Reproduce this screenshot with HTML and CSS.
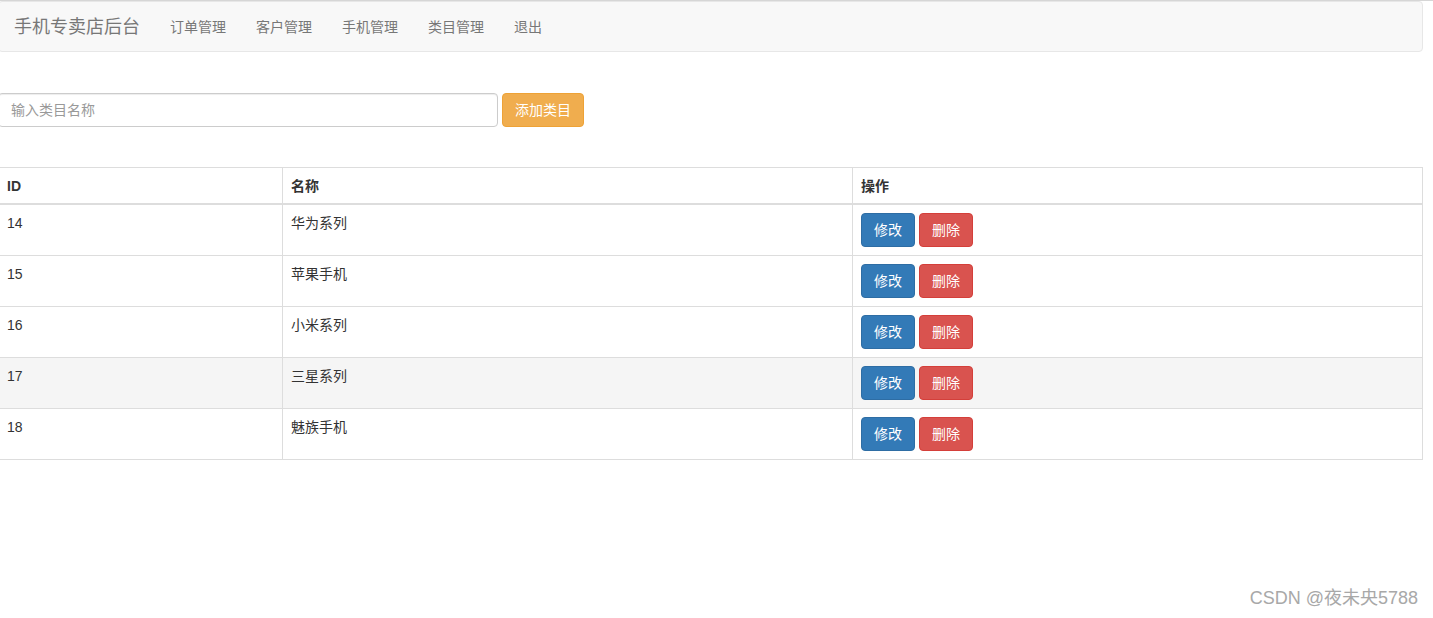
FILE: index.html
```html
<!DOCTYPE html>
<html lang="zh-CN">
<head>
<meta charset="utf-8">
<title>手机专卖店后台</title>
<link rel="stylesheet" href="styles.css">
</head>
<body>
<div class="topline"></div>
<div class="page">
  <nav class="navbar">
    <a class="brand" href="#">手机专卖店后台</a>
    <ul class="nav">
      <li><a href="#">订单管理</a></li>
      <li><a href="#">客户管理</a></li>
      <li><a href="#">手机管理</a></li>
      <li><a href="#">类目管理</a></li>
      <li><a href="#">退出</a></li>
    </ul>
  </nav>

  <form class="add-form">
    <input class="form-control" type="text" placeholder="输入类目名称">
    <button class="btn btn-warning" type="button">添加类目</button>
  </form>

  <table class="table">
    <thead>
      <tr><th class="c1">ID</th><th class="c2">名称</th><th class="c3">操作</th></tr>
    </thead>
    <tbody>
      <tr><td>14</td><td>华为系列</td><td><button class="btn btn-primary">修改</button> <button class="btn btn-danger">删除</button></td></tr>
      <tr><td>15</td><td>苹果手机</td><td><button class="btn btn-primary">修改</button> <button class="btn btn-danger">删除</button></td></tr>
      <tr><td>16</td><td>小米系列</td><td><button class="btn btn-primary">修改</button> <button class="btn btn-danger">删除</button></td></tr>
      <tr class="hover"><td>17</td><td>三星系列</td><td><button class="btn btn-primary">修改</button> <button class="btn btn-danger">删除</button></td></tr>
      <tr><td>18</td><td>魅族手机</td><td><button class="btn btn-primary">修改</button> <button class="btn btn-danger">删除</button></td></tr>
    </tbody>
  </table>
</div>
<div class="watermark">CSDN @夜未央5788</div>
</body>
</html>
```

FILE: styles.css
```css
* { box-sizing: border-box; }
html, body { margin: 0; padding: 0; }
body {
  font-family: "Liberation Sans", "Noto Sans CJK SC", Arial, sans-serif;
  font-size: 14px;
  line-height: 20px;
  color: #333;
  background: #fff;
  position: relative;
  height: 618px;
  overflow: hidden;
}
.topline { height: 1px; background: #d6d6d6; }
.page {
  margin-left: -2px;
  width: 1425px;
}
.navbar {
  display: flex;
  align-items: center;
  height: 51px;
  background: #f8f8f8;
  border: 1px solid #e7e7e7;
  border-radius: 4px;
}
.brand {
  padding: 15px;
  font-size: 18px;
  line-height: 20px;
  color: #777;
  text-decoration: none;
}
.nav { display: flex; list-style: none; margin: 0; padding: 0; }
.nav a {
  display: block;
  padding: 15px;
  line-height: 20px;
  color: #777;
  text-decoration: none;
}
.add-form {
  display: flex;
  gap: 4px;
  margin: 41px 0 40px 0;
}
.form-control {
  width: 500px;
  height: 34px;
  padding: 6px 12px;
  font-family: inherit;
  font-size: 14px;
  color: #555;
  border: 1px solid #ccc;
  border-radius: 4px;
  box-shadow: inset 0 1px 1px rgba(0,0,0,.075);
  outline: none;
}
.form-control::placeholder { color: #999; }
.btn {
  display: inline-block;
  height: 34px;
  padding: 6px 12px;
  font-family: inherit;
  font-size: 14px;
  line-height: 20px;
  border: 1px solid transparent;
  border-radius: 4px;
  color: #fff;
  cursor: pointer;
  vertical-align: middle;
}
.btn-warning { background: #f0ad4e; border-color: #eea236; width: 82px; }
.btn-primary { background: #337ab7; border-color: #2e6da4; width: 54px; }
.btn-danger { background: #d9534f; border-color: #d43f3a; width: 54px; }
.table {
  width: 100%;
  border-collapse: collapse;
  border: 1px solid #ddd;
}
.table th, .table td {
  border: 1px solid #ddd;
  padding: 8px;
  text-align: left;
  vertical-align: top;
  line-height: 20px;
}
.table th { font-weight: bold; }
.table thead th { border-bottom-width: 2px; height: 36px; padding-bottom: 7px; }
.table .c1 { width: 284px; }
.table .c2 { width: 570px; }
.table tbody td { height: 51px; }
.table tr.hover td { background: #f5f5f5; }
.watermark {
  position: absolute;
  right: 15px;
  top: 588px;
  font-size: 18px;
  color: #a8a8a8;
  font-family: "Liberation Sans", "Noto Sans CJK SC", sans-serif;
}
```
